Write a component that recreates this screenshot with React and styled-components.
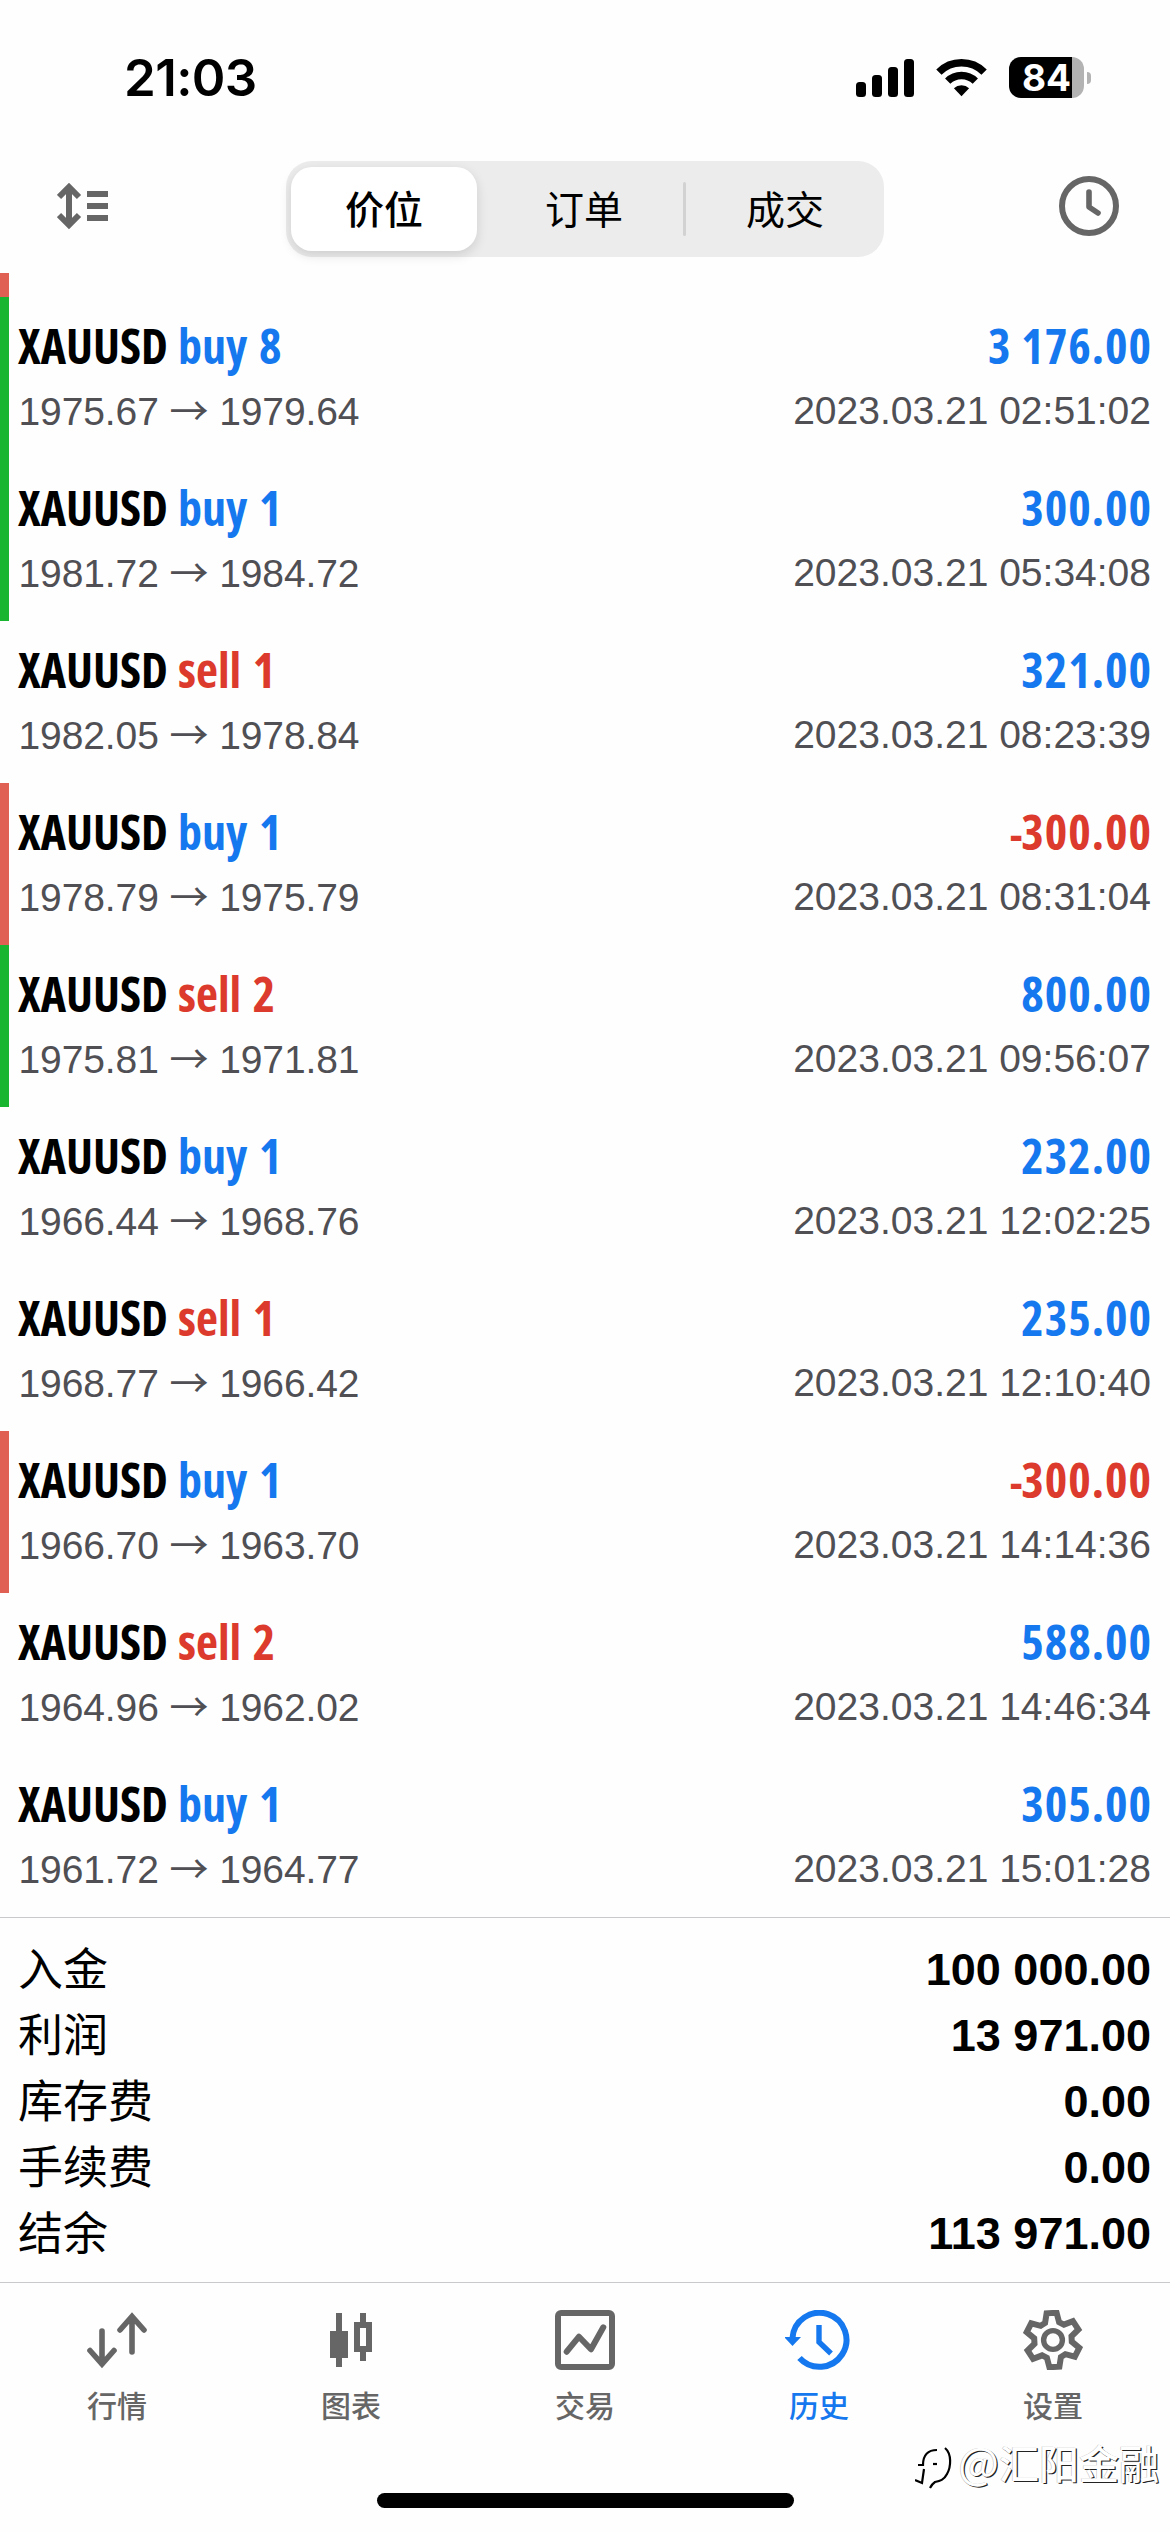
import React from "react";
import styled, { createGlobalStyle } from "styled-components";

const BLUE = "#1678ee";
const RED = "#dc3a2c";
const GRAY = "#666666";

const GlobalStyle = createGlobalStyle`
  * {
    box-sizing: border-box;
  }
  body {
    margin: 0;
    background: #fefefe;
    font-family: "Liberation Sans", "Noto Sans CJK SC", sans-serif;
  }
  svg {
    display: block;
    flex: none;
  }
`;

const Screen = styled.div`
  position: relative;
  display: flex;
  flex-direction: column;
  width: 1170px;
  height: 2532px;
  overflow: hidden;
  background: #fefefe;
`;

const StatusBar = styled.div`
  display: flex;
  align-items: center;
  justify-content: space-between;
  height: 155px;
  padding: 0 79px 0 124px;
`;

const Time = styled.div`
  font-family: "Inter", sans-serif;
  font-size: 51px;
  font-weight: 600;
  letter-spacing: -0.6px;
  line-height: 60px;
  color: #000;
`;

const StatusIcons = styled.div`
  display: flex;
  align-items: center;
  gap: 22px;
`;

const Battery = styled.div`
  display: flex;
  align-items: center;
  gap: 3px;
`;

const BatteryBody = styled.div`
  display: flex;
  align-items: center;
  justify-content: center;
  width: 75px;
  height: 41px;
  border-radius: 12px;
  background: linear-gradient(to right, #000 63px, #b3b3b3 63px);
  color: #fff;
  font-family: "Inter", sans-serif;
  font-size: 37px;
  font-weight: 700;
  line-height: 41px;
`;

const BatteryCap = styled.div`
  width: 4px;
  height: 12px;
  border-radius: 0 5px 5px 0;
  background: #b3b3b3;
`;

const Header = styled.div`
  display: flex;
  justify-content: space-between;
  height: 118px;
  padding: 6px 51px 0 57px;
`;

const HeaderIcon = styled.div`
  width: 60px;
  padding-top: ${(props) => props.top}px;
`;

const Segments = styled.div`
  display: flex;
  align-items: center;
  width: 598px;
  height: 96px;
  margin-right: 6px;
  padding-left: 5px;
  border-radius: 26px;
  background: #ececec;
`;

const Segment = styled.div`
  display: flex;
  justify-content: center;
  width: ${(props) => (props.active ? 186 : 198)}px;
  height: 84px;
  margin-right: ${(props) => (props.active ? 8 : 0)}px;
  padding-top: 12px;
  border-radius: 21px;
  background: ${(props) => (props.active ? "#fff" : "transparent")};
  box-shadow: ${(props) => (props.active ? "0 4px 12px rgba(0, 0, 0, 0.13)" : "none")};
  color: #000;
  font-size: 39px;
  font-weight: ${(props) => (props.active ? 500 : 400)};
  font-family: "Noto Sans CJK SC", sans-serif;
  line-height: 56px;
`;

const SegmentLine = styled.div`
  width: 3px;
  height: 54px;
  border-radius: 2px;
  background: #d2d2d2;
`;

const DealList = styled.div`
  display: flex;
  flex-direction: column;
`;

const CutRow = styled.div`
  height: 24px;
  border-left: 9px solid #e06053;
`;

const markColors = { tp: "#19b531", sl: "#e06053" };

const DealRow = styled.div`
  height: 162px;
  padding: 25px 19px 0 9px;
  border-left: 9px solid ${(props) => markColors[props.mark] || "transparent"};
`;

const DealLine = styled.div`
  display: flex;
  justify-content: space-between;
`;

const DealTitle = styled.div`
  display: flex;
  height: 67px;
  font-family: "Open Sans", sans-serif;
  font-stretch: 75%;
  font-size: 48px;
  font-weight: 660;
  line-height: 48px;
  color: #000;
`;

const Symbol = styled.span`
  width: 160px;
`;

const Side = styled.span`
  color: ${(props) => (props.side === "sell" ? RED : BLUE)};
  word-spacing: 3px;
`;

const Profit = styled.div`
  font-family: "Open Sans", sans-serif;
  font-stretch: 75%;
  font-size: 48px;
  font-weight: 660;
  line-height: 48px;
  letter-spacing: 1px;
  margin-right: -1px;
  color: ${(props) => (props.loss ? RED : BLUE)};
`;

const Minus = styled.span`
  font-size: 42px;
  letter-spacing: -1.5px;
`;

const DealInfo = styled.div`
  font-size: 39px;
  line-height: 44px;
  color: #4f4f54;
`;

const Prices = styled(DealInfo)`
  padding-left: 0.5px;
  letter-spacing: -0.1px;
`;

const Arrow = styled.span`
  font-family: "Noto Sans CJK SC", sans-serif;
  line-height: 1;
`;

const Summary = styled.div`
  display: flex;
  flex-direction: column;
  height: 365px;
  padding: 18px 19px 0 18px;
  border-top: 1px solid #c9c9cb;
`;

const SummaryRow = styled.div`
  display: flex;
  justify-content: space-between;
  height: 66px;
  color: #000;
`;

const SummaryLabel = styled.div`
  margin-top: -2px;
  font-family: "Noto Sans CJK SC", sans-serif;
  font-size: 45px;
  line-height: 66px;
`;

const SummaryValue = styled.div`
  padding-top: 1px;
  font-size: 45px;
  font-weight: 700;
  line-height: 66px;
`;

const TabBar = styled.div`
  display: flex;
  height: 211px;
  border-top: 1px solid #c9c9cb;
`;

const Tab = styled.div`
  display: flex;
  flex: 1;
  flex-direction: column;
  align-items: center;
  padding-top: 27px;
  color: ${(props) => (props.active ? BLUE : GRAY)};
`;

const TabLabel = styled.div`
  margin-top: 12px;
  font-family: "Noto Sans CJK SC", sans-serif;
  font-size: 30px;
  font-weight: 500;
  line-height: 44px;
`;

const HomeIndicator = styled.div`
  width: 417px;
  height: 15px;
  margin: 0 auto;
  border-radius: 8px;
  background: #000;
`;

const Watermark = styled.div`
  position: absolute;
  right: 11px;
  bottom: 40px;
  display: flex;
  align-items: center;
  color: #fff;
  font-family: "Noto Sans CJK SC", sans-serif;
  font-size: 40px;
  font-weight: 500;
  line-height: 60px;
  text-shadow: 1.2px 1.2px 0 #222, -0.5px -0.5px 0 #bbb;
`;

const WatermarkLogo = styled.div`
  margin: 12px 5px 0 0;
`;

const AtSign = styled.span`
  margin-top: -4px;
  font-size: 43px;
  font-weight: 400;
`;

function SignalIcon() {
  return (
    <svg width="58" height="38" viewBox="0 0 58 38">
      <rect x="0" y="23" width="10" height="15" rx="3.5" />
      <rect x="16" y="16" width="10" height="22" rx="3.5" />
      <rect x="32" y="8" width="10" height="30" rx="3.5" />
      <rect x="48" y="0" width="10" height="38" rx="3.5" />
    </svg>
  );
}

function WifiIcon() {
  return (
    <svg width="51" height="38" viewBox="0 0 51 38">
      <path d="M2.9 13.2 a32 32 0 0 1 45.2 0" fill="none" stroke="#000" strokeWidth="7.5" />
      <path d="M11.7 22.2 a19.6 19.6 0 0 1 27.6 0" fill="none" stroke="#000" strokeWidth="7.5" />
      <path d="M17.9 29.2 a11 11 0 0 1 15.2 0 l-7.6 8 z" />
    </svg>
  );
}

function SortIcon() {
  return (
    <svg width="52" height="48" viewBox="0 0 52 48" fill="none" stroke={GRAY} strokeWidth="6">
      <path d="M12 5 V43 M2 15 L12 5 L22 15 M2 33 L12 43 L22 33" />
      <path d="M30 12 H51 M30 24 H51 M30 36 H51" />
    </svg>
  );
}

function ClockIcon() {
  return (
    <svg width="60" height="60" viewBox="0 0 60 60" fill="none" stroke={GRAY} strokeWidth="6">
      <circle cx="30" cy="30" r="27" />
      <path d="M30 16 V31 L39 37" strokeWidth="5.6" strokeLinecap="round" strokeLinejoin="round" />
    </svg>
  );
}

function QuotesIcon() {
  return (
    <svg width="60" height="60" viewBox="0 0 60 60" fill="none" stroke="currentColor" strokeWidth="5.6" strokeLinecap="round">
      <path d="M15 21 V54 M3 40.5 L15 54 L27 40.5" />
      <path d="M45 42 V7 M33 20 L45 6.5 L57 20" />
    </svg>
  );
}

function ChartIcon() {
  return (
    <svg width="60" height="60" viewBox="0 0 60 60" fill="none" stroke="currentColor" strokeWidth="6">
      <path d="M18 3 V57 M42 3 V13 M42 41 V51" />
      <rect x="9" y="21" width="18" height="27" fill="currentColor" stroke="none" />
      <rect x="36" y="15" width="12" height="24" />
    </svg>
  );
}

function TradeIcon() {
  return (
    <svg width="60" height="60" viewBox="0 0 60 60" fill="none" stroke="currentColor" strokeWidth="6">
      <rect x="3" y="3" width="54" height="54" rx="3" />
      <path d="M11.7 41.7 L24 26.7 L36 39.3 L48.3 17.3" strokeLinecap="round" strokeLinejoin="round" />
    </svg>
  );
}

function HistoryIcon() {
  return (
    <svg width="68" height="60" viewBox="0 0 68 60" fill="none" stroke="currentColor" strokeWidth="6">
      <path d="M7.5 28 A27 27 0 1 1 14.5 48" />
      <path d="M-1 27 H16 L7.5 36 Z" fill="currentColor" stroke="none" />
      <path d="M34 15 V32 L46 43.5" strokeWidth="5.4" />
    </svg>
  );
}

// six teeth, turned slightly to the left
const gearPoints = [0, 1, 2, 3, 4, 5]
  .flatMap((tooth) =>
    [
      [-7, -17.5],
      [-5, -27],
      [5, -27],
      [7, -17.5],
    ].map(([x, y]) => {
      const a = ((tooth * 60 - 3) * Math.PI) / 180;
      return [
        (30 + x * Math.cos(a) - y * Math.sin(a)).toFixed(1),
        (30 + x * Math.sin(a) + y * Math.cos(a)).toFixed(1),
      ].join(",");
    })
  )
  .join(" ");

function GearIcon() {
  return (
    <svg width="60" height="60" viewBox="0 0 60 60" fill="none" stroke="currentColor" strokeWidth="6">
      <polygon points={gearPoints} />
      <circle cx="30" cy="30" r="9.4" strokeWidth="5.4" />
    </svg>
  );
}

function FaceLogo() {
  return (
    <svg width="38" height="46" viewBox="0 0 38 46" fill="none" stroke="#000" strokeWidth="2.2">
      <path d="M3 20 H8 C8 10 13 5 22 5" />
      <path d="M30 3 C37 9 36 22 32 29 C29 35 25 36 20 37 C17 39 16 41 15 43" />
      <path d="M9 24 L7 38 L0 35" />
      <path d="M18 19 H22" />
    </svg>
  );
}

const deals = [
  { side: "buy", volume: "8", open: "1975.67", close: "1979.64", profit: "3 176.00", time: "2023.03.21 02:51:02", mark: "tp" },
  { side: "buy", volume: "1", open: "1981.72", close: "1984.72", profit: "300.00", time: "2023.03.21 05:34:08", mark: "tp" },
  { side: "sell", volume: "1", open: "1982.05", close: "1978.84", profit: "321.00", time: "2023.03.21 08:23:39" },
  { side: "buy", volume: "1", open: "1978.79", close: "1975.79", profit: "300.00", loss: true, time: "2023.03.21 08:31:04", mark: "sl" },
  { side: "sell", volume: "2", open: "1975.81", close: "1971.81", profit: "800.00", time: "2023.03.21 09:56:07", mark: "tp" },
  { side: "buy", volume: "1", open: "1966.44", close: "1968.76", profit: "232.00", time: "2023.03.21 12:02:25" },
  { side: "sell", volume: "1", open: "1968.77", close: "1966.42", profit: "235.00", time: "2023.03.21 12:10:40" },
  { side: "buy", volume: "1", open: "1966.70", close: "1963.70", profit: "300.00", loss: true, time: "2023.03.21 14:14:36", mark: "sl" },
  { side: "sell", volume: "2", open: "1964.96", close: "1962.02", profit: "588.00", time: "2023.03.21 14:46:34" },
  { side: "buy", volume: "1", open: "1961.72", close: "1964.77", profit: "305.00", time: "2023.03.21 15:01:28" },
];

const summary = [
  ["入金", "100 000.00"],
  ["利润", "13 971.00"],
  ["库存费", "0.00"],
  ["手续费", "0.00"],
  ["结余", "113 971.00"],
];

const tabs = [
  { label: "行情", icon: <QuotesIcon /> },
  { label: "图表", icon: <ChartIcon /> },
  { label: "交易", icon: <TradeIcon /> },
  { label: "历史", icon: <HistoryIcon />, active: true },
  { label: "设置", icon: <GearIcon /> },
];

function Deal({ deal }) {
  return (
    <DealRow mark={deal.mark}>
      <DealLine>
        <DealTitle>
          <Symbol>XAUUSD</Symbol>
          <Side side={deal.side}>
            {deal.side} {deal.volume}
          </Side>
        </DealTitle>
        <Profit loss={deal.loss ? 1 : 0}>
          {deal.loss && <Minus>-</Minus>}
          {deal.profit}
        </Profit>
      </DealLine>
      <DealLine>
        <Prices>
          {deal.open} <Arrow>→</Arrow> {deal.close}
        </Prices>
        <DealInfo>{deal.time}</DealInfo>
      </DealLine>
    </DealRow>
  );
}

export default function App() {
  return (
    <Screen>
      <GlobalStyle />
      <StatusBar>
        <Time>21:03</Time>
        <StatusIcons>
          <SignalIcon />
          <WifiIcon />
          <Battery>
            <BatteryBody>84</BatteryBody>
            <BatteryCap />
          </Battery>
        </StatusIcons>
      </StatusBar>
      <Header>
        <HeaderIcon top={21}>
          <SortIcon />
        </HeaderIcon>
        <Segments>
          <Segment active={1}>价位</Segment>
          <Segment>订单</Segment>
          <SegmentLine />
          <Segment>成交</Segment>
        </Segments>
        <HeaderIcon top={15}>
          <ClockIcon />
        </HeaderIcon>
      </Header>
      <DealList>
        <CutRow />
        {deals.map((deal) => (
          <Deal key={deal.time} deal={deal} />
        ))}
      </DealList>
      <Summary>
        {summary.map(([label, value]) => (
          <SummaryRow key={label}>
            <SummaryLabel>{label}</SummaryLabel>
            <SummaryValue>{value}</SummaryValue>
          </SummaryRow>
        ))}
      </Summary>
      <TabBar>
        {tabs.map((tab) => (
          <Tab key={tab.label} active={tab.active ? 1 : 0}>
            {tab.icon}
            <TabLabel>{tab.label}</TabLabel>
          </Tab>
        ))}
      </TabBar>
      <HomeIndicator />
      <Watermark>
        <WatermarkLogo>
          <FaceLogo />
        </WatermarkLogo>
        <AtSign>@</AtSign>
        汇阳金融
      </Watermark>
    </Screen>
  );
}
